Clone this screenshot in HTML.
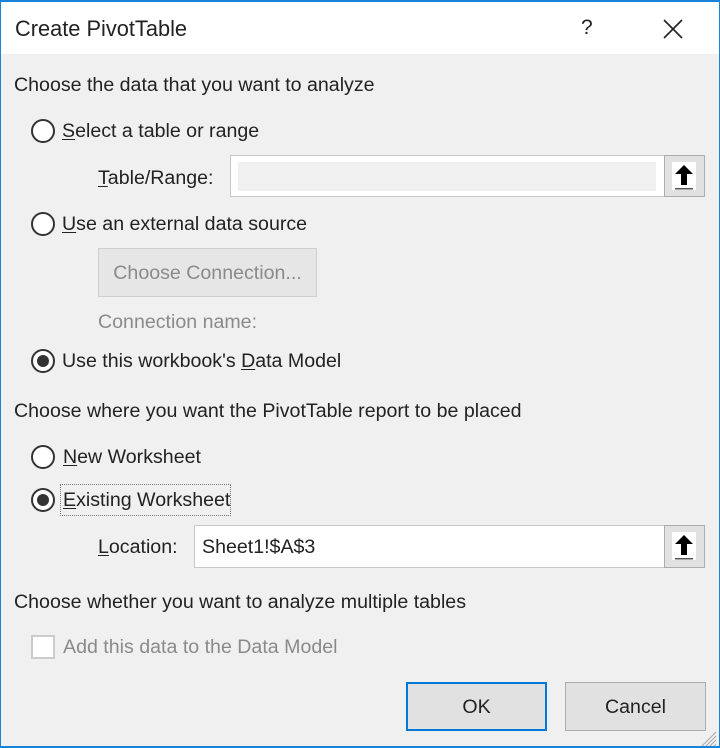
<!DOCTYPE html>
<html><head><style>
*{margin:0;padding:0;box-sizing:border-box}
body{width:720px;height:748px;background:#f0f0f0;font-family:"Liberation Sans",sans-serif;font-size:19.6px;color:#222;position:relative;overflow:hidden}
.frame{position:absolute;left:0;top:0;width:720px;height:748px;border:1px solid #1883d7;border-top-width:2px;border-bottom-width:2px}
.title{position:absolute;left:1px;top:2px;width:718px;height:52px;background:#fff}
.t{position:absolute;white-space:nowrap;line-height:20px}
.u{text-decoration:underline;text-underline-offset:2px}
.radio{position:absolute;width:24px;height:24px;border:2px solid #333;border-radius:50%;background:#fff}
.radio.on::after{content:"";position:absolute;left:4px;top:4px;width:12px;height:12px;border-radius:50%;background:#333}
.box{position:absolute;background:#fff;border:1px solid #c8c8c8}
.btn{position:absolute;background:#e1e1e1;border:1px solid #adadad;text-align:center}
.gray{color:#8a8a8a}
</style></head><body>
<div class="title"></div>
<div class="t" style="left:15px;top:19px;font-size:21.8px">Create PivotTable</div>
<div class="t" style="left:581px;top:18px;font-size:21px">?</div>
<svg style="position:absolute;left:663px;top:19px" width="20" height="20"><path d="M1 1L19 19M19 1L1 19" stroke="#222" stroke-width="1.6"/></svg>

<div class="t" style="left:14px;top:75px">Choose the data that you want to analyze</div>
<div class="radio" style="left:31px;top:119px"></div>
<div class="t" style="left:62px;top:121px"><span class="u">S</span>elect a table or range</div>
<div class="t" style="left:98px;top:168px"><span class="u">T</span>able/Range:</div>
<div class="box" style="left:230px;top:155px;width:475px;height:42px"></div>
<div style="position:absolute;left:238px;top:162px;width:418px;height:29px;background:#f0f0f0"></div>
<div class="btn" style="left:664px;top:155px;width:41px;height:42px;background:#e1e1e1"></div>
<svg style="position:absolute;left:671px;top:161px" width="26" height="30"><rect x="1" y="1" width="24" height="28" fill="#fff"/><path d="M13 4L4 13H10V24H16V13H22Z" fill="#000"/><rect x="4" y="27" width="18" height="1.5" fill="#555"/></svg>

<div class="radio" style="left:31px;top:212px"></div>
<div class="t" style="left:62px;top:214px"><span class="u">U</span>se an external data source</div>
<div class="btn gray" style="left:98px;top:248px;width:219px;height:49px;line-height:49px;background:#e6e6e6;border-color:#cfcfcf">Choose Connection...</div>
<div class="t gray" style="left:98px;top:312px">Connection name:</div>
<div class="radio on" style="left:31px;top:349px"></div>
<div class="t" style="left:62px;top:351px">Use this workbook's <span class="u">D</span>ata Model</div>

<div class="t" style="left:14px;top:401px">Choose where you want the PivotTable report to be placed</div>
<div class="radio" style="left:31px;top:445px"></div>
<div class="t" style="left:63px;top:447px"><span class="u">N</span>ew Worksheet</div>
<div class="radio on" style="left:31px;top:488px"></div>
<div style="position:absolute;left:60px;top:484px;width:171px;height:32px;border:1px dotted #777"></div>
<div class="t" style="left:63px;top:490px"><span class="u">E</span>xisting Worksheet</div>
<div class="t" style="left:98px;top:537px"><span class="u">L</span>ocation:</div>
<div class="box" style="left:194px;top:525px;width:511px;height:43px"></div>
<div class="t" style="left:202px;top:537px">Sheet1!$A$3</div>
<div class="btn" style="left:664px;top:525px;width:41px;height:43px"></div>
<svg style="position:absolute;left:671px;top:531px" width="26" height="30"><rect x="1" y="1" width="24" height="28" fill="#fff"/><path d="M13 4L4 13H10V24H16V13H22Z" fill="#000"/><rect x="4" y="27" width="18" height="1.5" fill="#555"/></svg>

<div class="t" style="left:14px;top:592px">Choose whether you want to analyze multiple tables</div>
<div style="position:absolute;left:31px;top:635px;width:24px;height:24px;background:#fff;border:2px solid #ccc"></div>
<div class="t gray" style="left:63px;top:637px">Add this data to the Data Model</div>

<div class="btn" style="left:406px;top:682px;width:141px;height:49px;line-height:47px;border:2px solid #0078d7">OK</div>
<div class="btn" style="left:565px;top:682px;width:141px;height:49px;line-height:49px">Cancel</div>
<svg style="position:absolute;left:700px;top:730px" width="18" height="16"><path d="M16 2L2 16M16 6L6 16M16 10L10 16M16 14L14 16" stroke="#aaa" stroke-width="1"/></svg>
<div class="frame"></div>
</body></html>
